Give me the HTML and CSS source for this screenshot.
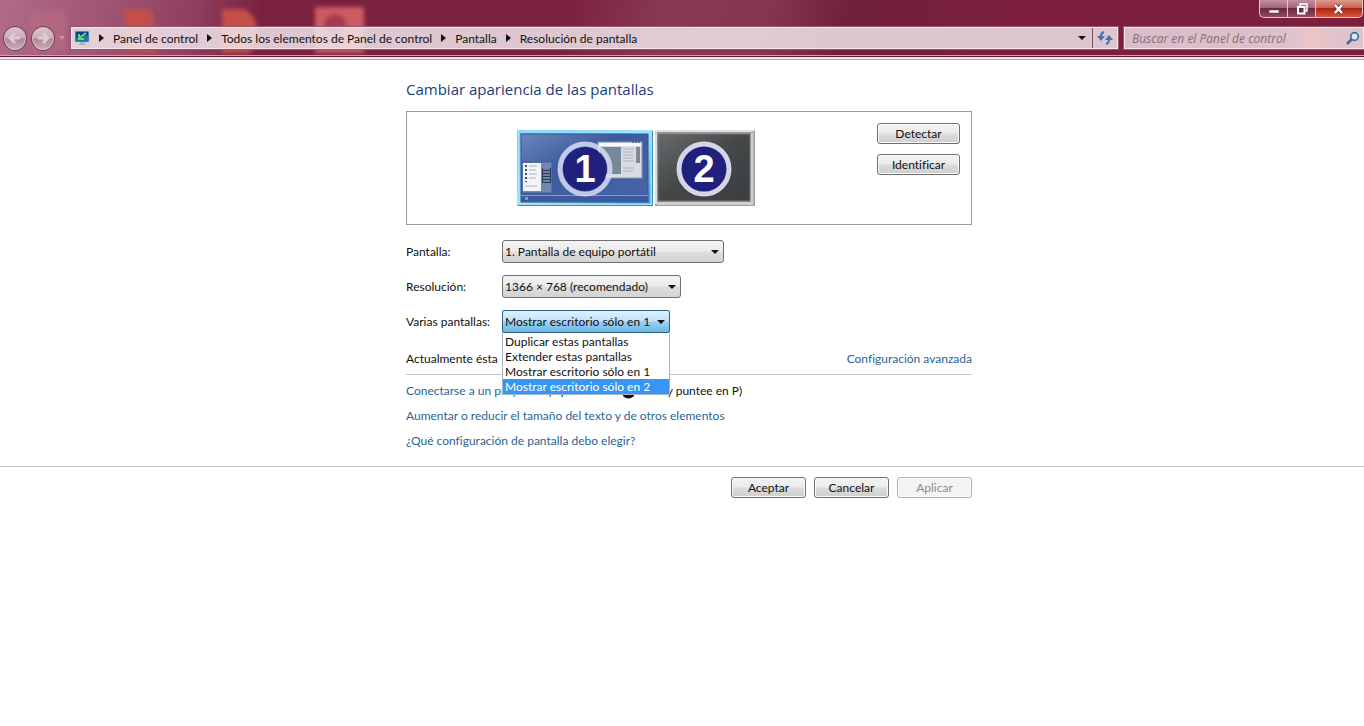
FILE: index.html
```
<!DOCTYPE html>
<html lang="es">
<head>
    <meta charset="UTF-8">
    <title>Resolución de pantalla</title>
    <link rel="stylesheet" href="styles.css">
</head>
<body>

<header class="window-frame">
    <svg class="glass" width="420" height="56" aria-hidden="true">
        <defs>
            <filter id="soft" x="-20%" y="-20%" width="140%" height="140%"><feGaussianBlur stdDeviation="2"/></filter>
        </defs>
        <g filter="url(#soft)">
            <rect x="30" y="11" width="36" height="40" fill="#b76c86" opacity=".6"/>
            <path d="M125 9h24q6 4 4 11l3 32h-31z" fill="#c44f48"/>
            <path d="M222 9h20q14 4 15 20t-8 24h-27z" fill="#c44f48"/>
            <rect x="315" y="7" width="49" height="46" fill="#cc5b62"/>
            <circle cx="335" cy="25" r="11" fill="#a53b50"/>
        </g>
    </svg>

    <div class="caption">
        <button class="cap" aria-label="Minimizar"><svg width="12" height="14"><rect x="1" y="8" width="10" height="3" fill="#fff" stroke="#5b3140" stroke-width=".5"/></svg></button>
        <button class="cap" aria-label="Restaurar"><svg width="12" height="14"><path d="M4 4V2h7v7H9" fill="none" stroke="#fff" stroke-width="1.500"/><path d="M2 5h6.500v6.500H2z" fill="none" stroke="#fff" stroke-width="2"/></svg></button>
        <button class="cap cap-close" aria-label="Cerrar"><svg width="12" height="14"><path d="M2 3l7 8M9 3l-7 8" fill="none" stroke="#6d2a25" stroke-width="4"/><path d="M2 3l7 8M9 3l-7 8" fill="none" stroke="#fff" stroke-width="2.500"/></svg></button>
    </div>

    <nav class="nav-row">
        <div class="history">
            <button class="round" aria-label="Atrás"><svg width="14" height="14"><path d="M7 2L2 7l5 5M2 7h10" fill="none" stroke="#dccbd3" stroke-width="3"/></svg></button>
            <button class="round" aria-label="Adelante"><svg width="14" height="14"><path d="M7 2l5 5-5 5M12 7H2" fill="none" stroke="#dccbd3" stroke-width="3"/></svg></button>
            <span class="history-arrow"></span>
        </div>
        <div class="address">
            <svg class="place" width="16" height="16">
                <rect x="1" y="1" width="14" height="11" fill="#123a82" stroke="#b9cbd8"/>
                <path d="M1.500 8l13-3v6.500h-13z" fill="#1f79a8"/>
                <path d="M12 3L5 8M5 4v5h5" fill="none" stroke="#58dd70" stroke-width="2"/>
                <path d="M6 12h4v2h2v1H4v-1h2z" fill="#a9b6c0"/>
            </svg>
            <span class="crumb">Panel de control</span>
            <span class="crumb">Todos los elementos de Panel de control</span>
            <span class="crumb">Pantalla</span>
            <span class="crumb">Resolución de pantalla</span>
            <span class="address-arrow"></span>
            <button class="refresh" aria-label="Actualizar"><svg width="16" height="16"><path d="M7 2Q4 3 4 6v2M9 14q3-1 3-4V8" fill="none" stroke="#4674ac" stroke-width="2"/><path d="M0 6h8l-4 5zM8 10h8l-4-5z" fill="#4674ac"/></svg></button>
        </div>
        <div class="search">
            <input type="text" aria-label="Buscar" placeholder="Buscar en el Panel de control">
            <svg width="14" height="14"><circle cx="8.500" cy="5.500" r="3.800" fill="#e8e3ec" stroke="#3c6ca8" stroke-width="1.700"/><path d="M6 8l-5 5" stroke="#3c6ca8" stroke-width="2.500"/></svg>
        </div>
    </nav>
</header>

<main>
    <div class="content">
        <h1>Cambiar apariencia de las pantallas</h1>

        <section class="preview">
            <svg class="monitors" width="240" height="78" viewBox="0 0 240 78">
                <defs>
                    <linearGradient id="desk" x1="0" y1="0" x2="1" y2="1"><stop offset="0" stop-color="#6c86bb"/><stop offset=".4" stop-color="#3d5b9f"/><stop offset="1" stop-color="#4865a8"/></linearGradient>
                    <linearGradient id="off" x1="0" y1="0" x2="1" y2="1"><stop offset="0" stop-color="#686b6d"/><stop offset=".5" stop-color="#434748"/><stop offset="1" stop-color="#3a3e40"/></linearGradient>
                    <linearGradient id="frame" x1="0" y1="0" x2="1" y2="1"><stop offset="0" stop-color="#5dbbe8"/><stop offset=".5" stop-color="#a5e0fb"/><stop offset="1" stop-color="#369fdd"/></linearGradient>
                </defs>
                <rect x="1" y="1" width="136" height="76" rx="1" fill="url(#frame)"/>
                <rect x="2.500" y="2.500" width="133" height="73" fill="none" stroke="#a4e0fa" stroke-width="2"/>
                <path d="M1.500 76.500h135V2" fill="none" stroke="#2b8fce"/>
                <rect x="5" y="5" width="127" height="68" fill="url(#desk)" stroke="#2d568e"/>
                <path d="M5 67h127v6H5z" fill="#3c5b9e"/>
                <path d="M5 66.500h127" stroke="#819bcc"/>
                <rect x="9" y="68" width="3" height="3" fill="#71a785"/>
                <rect x="6" y="33" width="30" height="31" fill="#7187b5" stroke="#415b94"/>
                <rect x="7" y="34" width="18" height="28" fill="#f2f4f8"/>
                <rect x="26" y="39" width="9" height="15" fill="#293960"/>
                <path d="M10 36v17" stroke="#45516f" stroke-width="2" stroke-dasharray="2 2"/>
                <path d="M13 37h8M13 41h7M13 45h8M13 49h7M9 57h12" stroke="#a8b0c0"/>
                <path d="M27 40h7M27 43h7M27 46h7M27 49h7M27 52h7" stroke="#c1c9da"/>
                <rect x="82" y="13" width="44" height="36" fill="#d9dce2" stroke="#8999b6"/>
                <rect x="83" y="14" width="42" height="3" fill="#fafafa"/>
                <rect x="84" y="18" width="21" height="27" fill="#75899d"/>
                <path d="M107 20h11M107 23h10M107 26h11M107 29h10M107 32h11M107 39h11M107 42h10" stroke="#aeb2b8"/>
                <rect x="120" y="18" width="4" height="16" fill="#808996"/>
                <path d="M116 13h8" stroke="#27395e" stroke-dasharray="2 1"/>
                <rect x="139" y="1" width="100" height="76" rx="1" fill="#9c9c9c"/>
                <path d="M140 75V2h98" fill="none" stroke="#dedede" stroke-width="2"/>
                <path d="M141 74.500h95V4" fill="none" stroke="#cecece" stroke-width="3"/>
                <rect x="142" y="5" width="92" height="67" fill="url(#off)" stroke="#777"/>
                <circle cx="69" cy="40" r="22" fill="#20217c"/>
                <circle cx="69" cy="40" r="25" fill="none" stroke="#d9dcf4" stroke-opacity=".85" stroke-width="5"/>
                <circle cx="188" cy="40" r="25" fill="#20217c" stroke="#d5d5e8" stroke-width="5"/>
                <text class="num" x="69" y="53">1</text>
                <text class="num" x="188" y="53">2</text>
            </svg>
            <div class="preview-buttons">
                <button class="btn">Detectar</button>
                <button class="btn">Identificar</button>
            </div>
        </section>

        <form class="settings">
            <label for="pantalla">Pantalla:</label>
            <div class="combo combo-display">
                <select id="pantalla"><option>1. Pantalla de equipo portátil</option></select>
            </div>

            <label for="resolucion">Resolución:</label>
            <div class="combo combo-resolution">
                <select id="resolucion"><option>1366 × 768 (recomendado)</option></select>
            </div>

            <label for="varias">Varias pantallas:</label>
            <div class="combo combo-open">
                <select id="varias"><option>Mostrar escritorio sólo en 1</option></select>
                <ul class="menu">
                    <li>Duplicar estas pantallas</li>
                    <li>Extender estas pantallas</li>
                    <li>Mostrar escritorio sólo en 1</li>
                    <li class="selected">Mostrar escritorio sólo en 2</li>
                </ul>
            </div>
        </form>

        <div class="status">
            <span>Actualmente ésta</span>
            <a href="#">Configuración avanzada</a>
        </div>

        <div class="links">
            <p><a href="#">Conectarse a un proyector</a> (o presione la <svg class="winkey" width="15" height="15"><circle cx="7.500" cy="7.500" r="7" fill="#111"/><path d="M4 4h3v3H4zM8 4h3v3H8zM4 8h3v3H4zM8 8h3v3H8z" fill="#fff"/></svg> tecla y puntee en P)</p>
            <p><a href="#">Aumentar o reducir el tamaño del texto y de otros elementos</a></p>
            <p><a href="#">¿Qué configuración de pantalla debo elegir?</a></p>
        </div>
    </div>
</main>

<footer>
    <div class="content actions">
        <button class="btn">Aceptar</button>
        <button class="btn">Cancelar</button>
        <button class="btn" disabled>Aplicar</button>
    </div>
</footer>

</body>
</html>
```
FILE: styles.css
```
* {
    box-sizing: border-box;
}
body {
    margin: 0;
    background: #fff;
    color: #111;
    font: 12px/15px Lato, "Open Sans", sans-serif;
    font-variant-ligatures: none;
}
button, select, input {
    font: inherit;
    font-variant-ligatures: none;
    color: inherit;
}
a {
    color: #2a6496;
    text-decoration: none;
}

/* window frame */
.window-frame {
    position: relative;
    height: 60px;
    background: linear-gradient(100deg, #b06c8a 0, #a05674 100px, #90405f 190px, #7a2140 260px, #7b2142 560px, #883a55 660px, #843550 760px, #702039 840px, #7c1f3d 1000px, #7c1f3d 100%);
    border-bottom: 1px solid #b3a9b8;
    box-shadow: inset 0 -2px #f1e4f0, inset 0 -3px #5b1930, inset 0 -4px #cfa0b4;
}
.glass {
    position: absolute;
    left: 0;
    top: 0;
}
.caption {
    position: relative;
    display: flex;
    justify-content: flex-end;
    height: 18px;
    padding-right: 1px;
}
.cap {
    display: flex;
    align-items: center;
    justify-content: center;
    width: 28px;
    padding: 0;
    border: 1px solid #e7c3cf;
    border-width: 0 0 1px 1px;
    background: linear-gradient(#c091a1 0, #a3647a 45%, #6c2840 50%, #8d4c62 100%);
}
.cap:first-child {
    border-bottom-left-radius: 5px;
}
.cap-close {
    width: 48px;
    border-right-width: 1px;
    border-bottom-right-radius: 5px;
    background: linear-gradient(#dc9a8c 0, #cb6350 45%, #ad2412 50%, #d4563c 100%);
}
.nav-row {
    position: relative;
    display: flex;
    align-items: center;
    gap: 6px;
    margin-top: 6px;
    height: 28px;
    padding-left: 3px;
}
.history {
    display: flex;
    align-items: center;
    gap: 4px;
    width: 62px;
}
.round {
    display: flex;
    align-items: center;
    justify-content: center;
    width: 25px;
    height: 25px;
    padding: 0;
    border: 1px solid #6d4152;
    border-radius: 50%;
    background: linear-gradient(#dcc5cf 0, #c9a9b6 48%, #ae8795 52%, #cdb0bc 100%);
    box-shadow: inset 0 0 0 1px #d8bdc8;
}
.history-arrow, .address-arrow, .combo::after {
    border: 4px solid transparent;
    border-top-color: #111;
    border-bottom: 0;
}
.history-arrow {
    border-width: 4px 3px 0;
    border-top-color: #c894a8;
}
.address, .search {
    display: flex;
    align-items: center;
    height: 22px;
    border: 1px solid #f4e6ec;
    box-shadow: 0 0 0 1px #97566c;
}
.address {
    flex: 1;
    padding-left: 2px;
    background: rgba(240, 228, 234, .85);
}
.crumb {
    display: flex;
    align-items: center;
    white-space: nowrap;
}
.crumb::before {
    content: "";
    margin: 0 9px;
    border: 4px solid transparent;
    border-left: 5px solid #111;
    border-right: 0;
}
.address-arrow {
    margin: 0 6px 0 auto;
}
.refresh {
    display: flex;
    align-items: center;
    justify-content: center;
    width: 25px;
    height: 20px;
    padding: 0;
    border: 0;
    border-left: 1px solid #7a5362;
    background: none;
}
.search {
    width: 240px;
    padding: 0 3px 0 7px;
    background: linear-gradient(90deg, #d9bdc8 0, #dcc2cc 165px, #ecc4c6 185px, #dec3cc 215px);
}
.search input {
    flex: 1;
    min-width: 0;
    padding: 0;
    border: 0;
    background: none;
    font-family: "Open Sans", sans-serif;
    font-style: italic;
}
.search input::placeholder {
    color: #80707a;
    opacity: 1;
}

/* page content */
main {
    padding: 19px 0 8px 14px;
}
.content {
    max-width: 566px;
    margin: 0 auto;
}
h1 {
    margin: 0 0 12px;
    color: #1c3c80;
    font: 15px/20px "Open Sans", sans-serif;
}
.preview {
    display: flex;
    justify-content: flex-end;
    gap: 121px;
    height: 114px;
    padding: 11px;
    border: 1px solid #9b9fa1;
}
.monitors {
    margin-top: 6px;
}
.num {
    fill: #fff;
    font: bold 38px "Liberation Sans", Arial, sans-serif;
    text-anchor: middle;
}
.preview-buttons {
    display: flex;
    flex-direction: column;
    gap: 10px;
    width: 83px;
}
.btn {
    height: 21px;
    padding: 0 12px;
    border: 1px solid #707070;
    border-radius: 3px;
    background: linear-gradient(#f3f3f3 0, #ebebeb 48%, #dcdcdc 52%, #cfcfcf 100%);
    box-shadow: inset 0 0 0 1px #fafafa;
}
.btn:disabled {
    border-color: #adb2b5;
    background: #f4f4f4;
    color: #8b8b8b;
}
.settings {
    display: grid;
    grid-template-columns: 96px 1fr;
    align-items: center;
    row-gap: 12px;
    margin-top: 15px;
}
.combo {
    position: relative;
    height: 23px;
}
.combo::after {
    content: "";
    position: absolute;
    right: 5px;
    top: 10px;
    pointer-events: none;
}
.combo-display {
    width: 222px;
}
.combo-resolution {
    width: 179px;
}
.combo-open {
    width: 168px;
}
.combo select {
    appearance: none;
    width: 100%;
    height: 23px;
    padding: 0 2px;
    border: 1px solid #707070;
    border-radius: 3px;
    background: linear-gradient(#f3f3f3 0, #ebebeb 48%, #dedede 52%, #d3d3d3 100%);
}
.combo-open select {
    border-color: #2c628b;
    border-radius: 2px;
    background: linear-gradient(#e0f1fb 0, #bfe2f7 48%, #98d1f2 52%, #70b8e4 100%);
}
.menu {
    position: absolute;
    z-index: 1;
    top: 23px;
    left: 0;
    width: 100%;
    margin: 0;
    padding: 1px 0 0;
    border: 1px solid #a7b4c4;
    border-top: 0;
    background: #fff;
    list-style: none;
}
.menu li {
    padding: 0 2px;
    white-space: nowrap;
}
.menu .selected {
    background: #3796f3;
    color: #fff;
}
.status {
    display: flex;
    justify-content: space-between;
    margin-top: 18px;
    padding-bottom: 8px;
    border-bottom: 1px solid #c6c6c6;
}
.links p {
    height: 15px;
    margin: 8px 0 10px;
}
.links p + p {
    margin-top: 0;
}
.winkey {
    vertical-align: middle;
}
footer {
    padding: 10px 0 0 14px;
    border-top: 1px solid #c6c6c6;
}
.actions {
    display: flex;
    justify-content: flex-end;
    gap: 8px;
}
.actions .btn {
    min-width: 75px;
}
```
